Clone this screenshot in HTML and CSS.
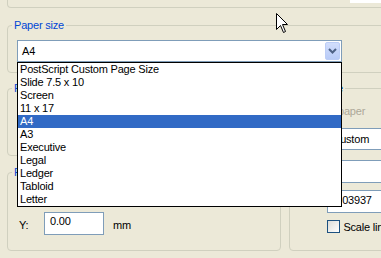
FILE: index.html
```html
<!DOCTYPE html>
<html lang="en">
<head>
    <meta charset="UTF-8">
    <meta name="viewport" content="width=device-width, initial-scale=1.0">
    <title>Page Setup</title>
    <link rel="stylesheet" href="styles.css">
</head>
<body>
    <div class="dialog">
        <div class="prev-group">
            <div class="prev-field"></div>
        </div>

        <fieldset class="group paper-size">
            <legend>Paper size</legend>
            <div class="group-body">
                <div class="combo wide">
                    <span class="combo-text">A4</span>
                    <span class="combo-btn">
                        <svg width="9" height="6" viewBox="0 0 9 6"><path d="M1 1 L4.5 4.5 L8 1" fill="none" stroke="#4d6185" stroke-width="2"/></svg>
                    </span>
                    <ul class="dropdown">
                        <li>PostScript Custom Page Size</li>
                        <li>Slide 7.5 x 10</li>
                        <li>Screen</li>
                        <li>11 x 17</li>
                        <li class="selected">A4</li>
                        <li>A3</li>
                        <li>Executive</li>
                        <li>Legal</li>
                        <li>Ledger</li>
                        <li>Tabloid</li>
                        <li>Letter</li>
                    </ul>
                </div>
            </div>
        </fieldset>

        <div class="lower">
            <div class="left-col">
                <fieldset class="group dims">
                    <legend>Paper dimensions</legend>
                    <div class="group-body rows">
                        <div class="row">
                            <span class="row-label"></span>
                            <span class="edit"></span>
                        </div>
                        <div class="row">
                            <span class="row-label"></span>
                            <span class="edit"></span>
                        </div>
                    </div>
                </fieldset>
                <fieldset class="group position">
                    <legend>Position</legend>
                    <div class="group-body rows">
                        <div class="row">
                            <span class="row-label"></span>
                            <span class="edit"></span>
                        </div>
                        <div class="row">
                            <span class="row-label">Y:</span>
                            <span class="edit">0.00</span>
                            <span class="unit">mm</span>
                        </div>
                    </div>
                </fieldset>
            </div>

            <fieldset class="group page-size">
                <legend>Page size</legend>
                <div class="group-body side">
                    <div class="disabled-text">Custom paper</div>
                    <div class="combo side-combo">
                        <span class="combo-text">Custom</span>
                    </div>
                    <div class="side-edit"></div>
                    <div class="side-edit">0.03937</div>
                    <label class="check">
                        <span class="check-box"></span>
                        <span>Scale lines</span>
                    </label>
                </div>
            </fieldset>
        </div>

        <svg class="cursor" width="13" height="21" viewBox="0 0 13 21">
            <path d="M0.5 0.5 L0.5 16.5 L4.5 12.5 L7.5 19.5 L9.5 18.5 L6.5 11.5 L11.5 11.5 Z" fill="#fff" stroke="#000" stroke-width="1"/>
        </svg>
    </div>
</body>
</html>
```

FILE: styles.css
```css
body {
    margin: 0;
    background-color: #ece9d8;
    font-family: Tahoma, "Liberation Sans", sans-serif;
    font-size: 11px;
    letter-spacing: -0.2px;
    color: #000;
    overflow: hidden;
}
.dialog {
    position: relative;
    width: 440px;
    height: 258px;
}
.prev-group {
    height: 7px;
    margin-left: 7px;
    border: 1px solid #d0d0bf;
    border-top: none;
    border-radius: 0 0 4px 4px;
}
.prev-field {
    margin-left: 342px;
    width: 80px;
    height: 3px;
    background-color: #fff;
}
fieldset.group {
    margin: 0;
    padding: 0;
    min-width: 0;
    border: 1px solid #d0d0bf;
    border-radius: 4px;
}
.group legend {
    color: #0046d5;
    padding: 0 2px;
    margin-left: 4px;
    line-height: 13px;
}
fieldset.paper-size {
    margin: 11px 0 0 7px;
}
.paper-size .group-body {
    padding: 8px 9px 10px;
}
.combo {
    position: relative;
    box-sizing: border-box;
    height: 22px;
    border: 1px solid #7f9db9;
    background-color: #fff;
    display: flex;
    align-items: center;
}
.combo.wide {
    width: 325px;
}
.combo-text {
    flex: 1;
    padding-left: 4px;
}
.combo-btn {
    align-self: stretch;
    width: 15px;
    margin: 1px 1px 1px 0;
    box-sizing: border-box;
    border: 1px solid #bccdf6;
    border-radius: 2px;
    background: linear-gradient(#d2defc, #b8cbf7);
    display: flex;
    align-items: center;
    justify-content: center;
}
.dropdown {
    position: absolute;
    left: -1px;
    top: calc(100% + 1px);
    width: 325px;
    box-sizing: border-box;
    margin: 0;
    padding: 0;
    list-style: none;
    border: 1px solid #000;
    background-color: #fff;
    z-index: 5;
}
.dropdown li {
    height: 13px;
    line-height: 13px;
    padding-left: 2px;
    white-space: nowrap;
}
.dropdown li.selected {
    background-color: #316ac5;
    color: #fff;
}
.lower {
    display: flex;
    gap: 8px;
    margin: 9px 0 0 7px;
}
.left-col {
    width: 277px;
    display: flex;
    flex-direction: column;
}
.rows {
    display: flex;
    flex-direction: column;
    gap: 6px;
    padding: 4px 11px 15px;
}
.dims .rows {
    gap: 5px;
    padding: 6px 11px 3px;
}
fieldset.position {
    margin-top: 10px;
}
.row {
    display: flex;
    align-items: flex-start;
    height: 23px;
}
.row-label {
    width: 25px;
    padding-top: 7px;
}
.edit {
    box-sizing: border-box;
    width: 60px;
    height: 23px;
    border: 1px solid #7f9db9;
    background-color: #fff;
    padding: 2px 5px;
    line-height: 13px;
}
.unit {
    margin-left: 9px;
    padding-top: 7px;
}
fieldset.page-size {
    width: 150px;
}
.side {
    display: flex;
    flex-direction: column;
    padding: 10px 0 17px 37px;
}
.disabled-text {
    margin-left: -29px;
    line-height: 13px;
    color: #aca899;
    white-space: nowrap;
}
.side-combo {
    margin-top: 10px;
    width: 110px;
}
.side-edit {
    box-sizing: border-box;
    margin-top: 10px;
    width: 110px;
    height: 23px;
    border: 1px solid #7f9db9;
    background-color: #fff;
    padding: 3px 4px 3px 5px;
    line-height: 13px;
}
.side-edit + .side-edit {
    margin-top: 7px;
}
.check {
    margin-top: 7px;
    display: flex;
    align-items: center;
    gap: 3px;
    height: 13px;
    white-space: nowrap;
}
.check-box {
    box-sizing: border-box;
    width: 13px;
    height: 13px;
    border: 1px solid #1c5180;
    background: linear-gradient(135deg, #dcdcd7, #fff);
}
.cursor {
    position: absolute;
    left: 276px;
    top: 13px;
    z-index: 10;
}
```
